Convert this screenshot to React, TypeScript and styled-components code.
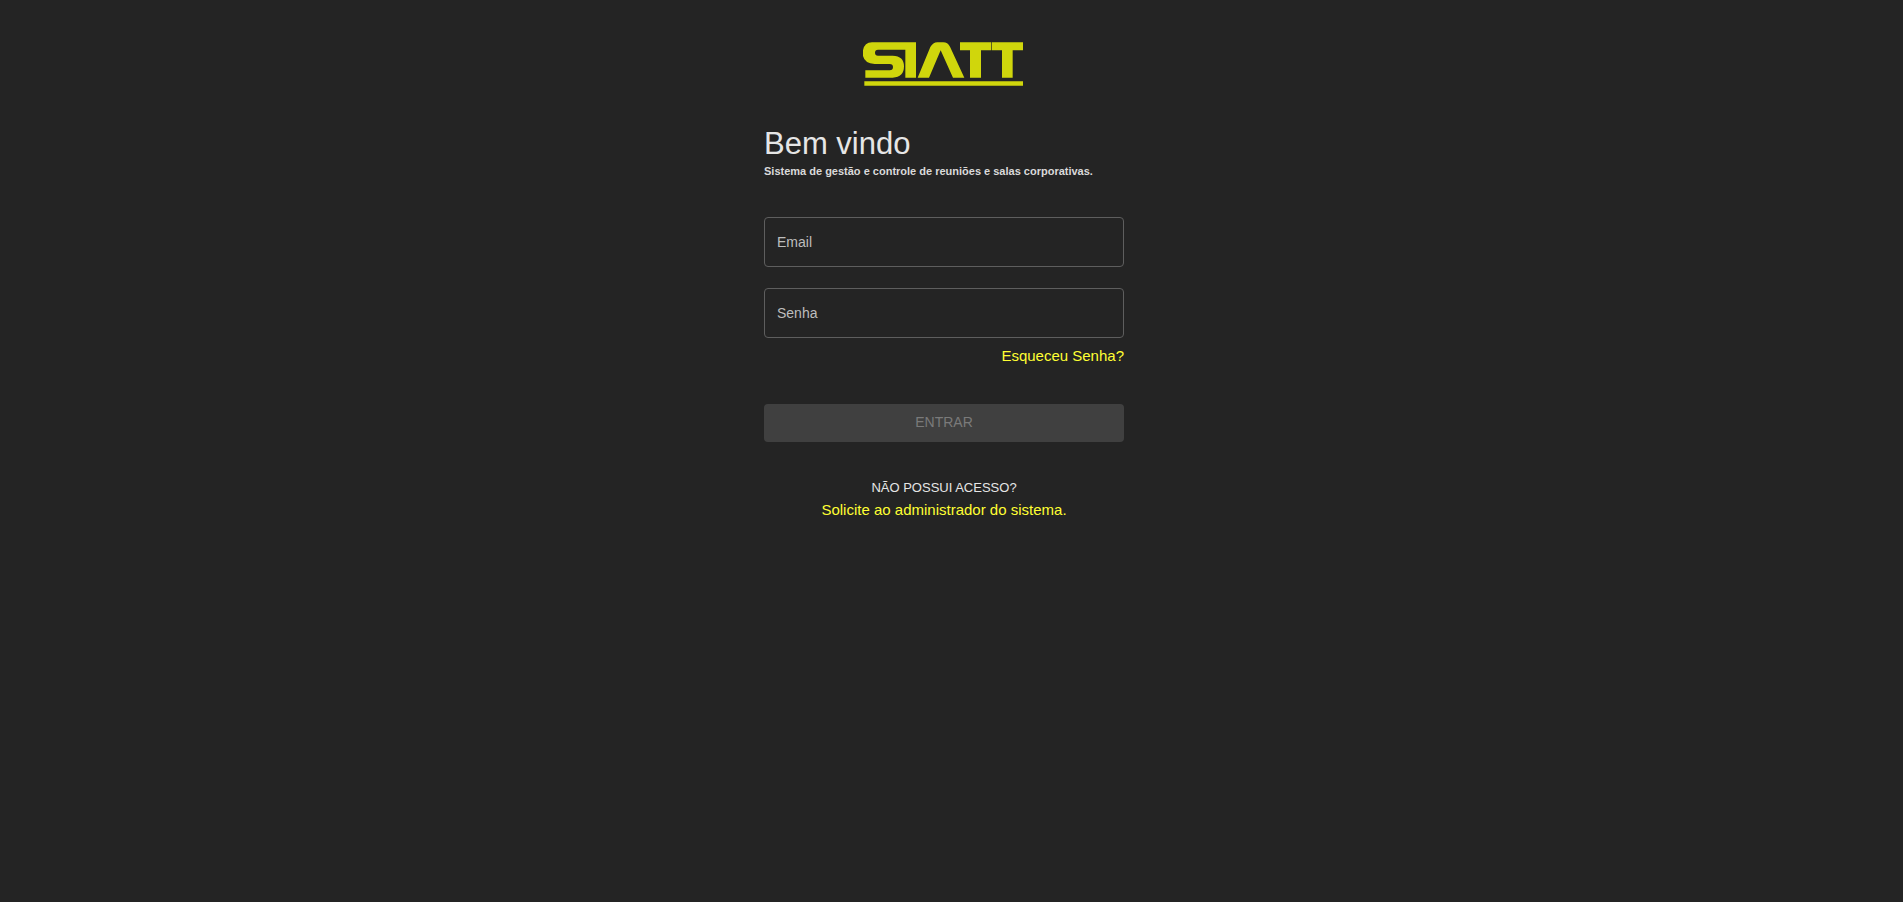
import React, { useState } from 'react';
import styled, { createGlobalStyle } from 'styled-components';

const GlobalStyle = createGlobalStyle`
  *, *::before, *::after { box-sizing: border-box; }
  body {
    margin: 0;
    background: #242424;
    color: #e6e6e6;
    font-family: "Liberation Sans", Arial, sans-serif;
    font-size: 14px;
    line-height: 22px;
  }
`;

const Page = styled.div`
  display: flex;
  justify-content: center;
  min-height: 100vh;
  padding: 42px 15px 42px 0;
`;

const Panel = styled.main`
  display: flex;
  flex-direction: column;
  width: 100%;
  max-width: 360px;
`;

const Logo = styled.svg`
  align-self: center;
  width: 162px;
  height: 44px;
  fill: #d0d60c;
`;

const Title = styled.h1`
  margin: 40px 0 0;
  font-size: 31px;
  font-weight: 400;
  line-height: 36px;
`;

const Subtitle = styled.h2`
  margin: 0;
  color: #dadada;
  font-size: 11px;
  font-weight: 700;
  line-height: 18px;
`;

const Form = styled.form`
  display: flex;
  flex-direction: column;
  margin-top: 37px;
`;

const Fields = styled.div`
  display: flex;
  flex-direction: column;
  gap: 21px;
`;

const TextInput = styled.input`
  width: 100%;
  height: 50px;
  padding: 0 12px;
  border: 1px solid #5e5e5e;
  border-radius: 4px;
  background: transparent;
  color: #e6e6e6;
  font: inherit;
  outline: none;

  &::placeholder { color: #bdbdbd; opacity: 1; }
  &:focus { border-color: #ffff33; }
`;

const TextLink = styled.a`
  color: #ffff33;
  font-size: 15px;
  text-decoration: none;
  &:hover { text-decoration: underline; }
`;

const Forgot = styled.div`
  margin-top: 7px;
  text-align: right;
`;

const SubmitButton = styled.button`
  height: 38px;
  margin-top: 37px;
  padding: 0 16px 2px;
  border: 0;
  border-radius: 4px;
  background: #ffff33;
  color: #242424;
  font: inherit;
  text-transform: uppercase;
  cursor: pointer;

  &:disabled { background: #404040; color: #7a7a7a; cursor: default; }
`;

const Access = styled.footer`
  display: flex;
  flex-direction: column;
  align-items: center;
  margin-top: 35px;
  font-size: 13px;
`;

export default function App() {
  const [email, setEmail] = useState('');
  const [password, setPassword] = useState('');

  return (
    <>
      <GlobalStyle />
      <Page>
        <Panel>
          <Logo viewBox="39 37 486 132" role="img" aria-label="SIATT">
            <path d="M66 38H198V144H166V60H84Q75 60 75 69Q75 78 84 78H128Q162 79 162 110Q162 143 128 144H46V122H119Q129 122 129 112Q129 103 119 103H74Q39 101 38 71Q39 39 66 38Z" />
            <path d="M203 144L241 52Q249 38 262 38H280Q293 38 300 51L343 144H309L272 62L237 144Z" />
            <path d="M330 38H424V62H393V144H360V62H330Z" />
            <path d="M426 38H519V62H488V144H456V62H426Z" />
            <path d="M43 155H519V168H43Z" />
          </Logo>
          <Title>Bem vindo</Title>
          <Subtitle>Sistema de gestão e controle de reuniões e salas corporativas.</Subtitle>
          <Form onSubmit={(event) => event.preventDefault()}>
            <Fields>
              <TextInput
                type="email"
                aria-label="Email"
                placeholder="Email"
                value={email}
                onChange={(event) => setEmail(event.target.value)}
              />
              <TextInput
                type="password"
                aria-label="Senha"
                placeholder="Senha"
                value={password}
                onChange={(event) => setPassword(event.target.value)}
              />
            </Fields>
            <Forgot>
              <TextLink href="#recuperar">Esqueceu Senha?</TextLink>
            </Forgot>
            <SubmitButton type="submit" disabled={!email || !password}>Entrar</SubmitButton>
          </Form>
          <Access>
            <span>NÃO POSSUI ACESSO?</span>
            <TextLink href="#acesso">Solicite ao administrador do sistema.</TextLink>
          </Access>
        </Panel>
      </Page>
    </>
  );
}
